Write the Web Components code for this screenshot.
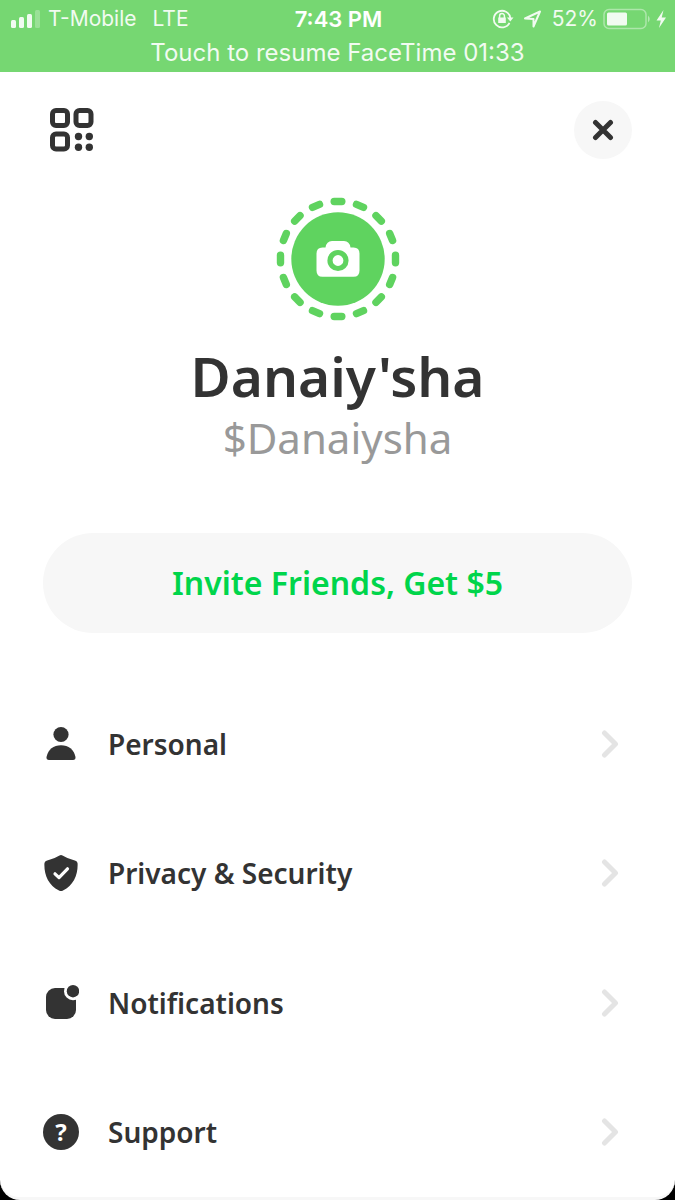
<!DOCTYPE html>
<html lang="en">
<head>
<meta charset="utf-8">
<meta name="viewport" content="width=device-width, initial-scale=1">
<title>Profile</title>
<style>
  html { background: #000; }
  body { margin: 0; font-family: "Noto Sans", "Open Sans", sans-serif; color: #333; }
</style>
</head>
<body>
<profile-page></profile-page>

<template id="page-tpl">
  <style>
    :host { display: flex; flex-direction: column; min-height: 100vh; box-sizing: border-box; background: #fff; border-radius: 0 0 20px 20px; border-bottom: 3px solid #f7f7f7; overflow: hidden; }
    header { display: flex; justify-content: space-between; align-items: center; padding: 29px 43px 0; }
    main { flex: 1; display: flex; flex-direction: column; }
    button { font: inherit; color: inherit; border: 0; padding: 0; margin: 0; background: none; cursor: pointer; }
    button svg { display: block; }
    .qr { padding: 0 7px; }
    .close { width: 58px; height: 58px; border-radius: 50%; background: #f7f7f7; display: grid; place-items: center; }
    .invite { margin: 70px 43px 46px; height: 100px; border-radius: 50px; background: #f7f7f7; color: #00d54b; font-size: 32px; line-height: 40px; font-weight: 600; }
    nav { flex: 1; display: grid; grid-auto-rows: 1fr; }
  </style>
  <status-bar></status-bar>
  <header>
    <button class="qr" aria-label="QR code">
      <svg width="44" height="44" viewBox="0 0 44 44" fill="#333">
        <g fill="none" stroke="#333" stroke-width="5"><rect x="2.5" y="2.5" width="15" height="15" rx="3.5"/><rect x="26" y="2.5" width="15" height="15" rx="3.5"/><rect x="2.5" y="26" width="15" height="15" rx="3.5"/></g>
        <circle cx="28.500" cy="28.500" r="3.700"/><circle cx="39.300" cy="28.500" r="3.700"/><circle cx="28.500" cy="39.300" r="3.700"/><circle cx="39.300" cy="39.300" r="3.700"/>
      </svg>
    </button>
    <button class="close" aria-label="Close">
      <svg width="22" height="22" viewBox="0 0 22 22" fill="none" stroke="#333" stroke-width="5" stroke-linecap="round"><path d="M3.500 3.500 18.500 18.500M18.500 3.500 3.500 18.500"/></svg>
    </button>
  </header>
  <main>
    <profile-card name="Danaiy'sha" tag="$Danaiysha"></profile-card>
    <button class="invite">Invite Friends, Get $5</button>
    <nav aria-label="Settings">
      <menu-row href="#personal">
        <svg slot="icon" width="36" height="36" viewBox="0 0 36 36" fill="#333"><circle cx="18" cy="8.500" r="7.600"/><path d="M3.500 31C5 23.500 10.500 19.200 18 19.200S31 23.500 32.500 31Q32.800 34 30 34H6Q3.200 34 3.500 31Z"/></svg>
        Personal
      </menu-row>
      <menu-row href="#privacy">
        <svg slot="icon" width="36" height="36" viewBox="0 0 36 36"><path fill="#333" d="M16.500.4Q18-.3 19.500.4 24.500 3.600 32.500 5.800 34.500 6.300 34.600 8.500C35 20 30.500 30 20 35.500Q18 36.500 16 35.500C5.500 30 1 20 1.400 8.500Q1.500 6.300 3.500 5.800 11.500 3.600 16.500.4Z"/><path d="M12 18.800 16 22.600 24.500 13.800" fill="none" stroke="#fff" stroke-width="3.200" stroke-linecap="round" stroke-linejoin="round"/></svg>
        Privacy &amp; Security
      </menu-row>
      <menu-row href="#notifications">
        <svg slot="icon" width="36" height="36" viewBox="0 0 36 36" fill="#333"><rect x="3" y="3" width="30" height="31" rx="9"/><circle cx="30" cy="6.200" r="9" fill="#fff"/><circle cx="30" cy="6.200" r="6.200"/></svg>
        Notifications
      </menu-row>
      <menu-row href="#support">
        <help-badge slot="icon">?</help-badge>
        Support
      </menu-row>
    </nav>
  </main>
</template>

<template id="status-tpl">
  <style>
    :host { display: block; height: 72px; background: #76d772; color: #fff; font-family: Inter, "Liberation Sans", sans-serif; font-size: 21px; line-height: 38px; }
    .line { display: grid; grid-template-columns: 1fr auto 1fr; padding: 0 8px 0 10px; }
    .side { display: flex; align-items: center; gap: 8px; opacity: .9; }
    .lte { margin-left: 8px; }
    .right { justify-content: flex-end; gap: 9px; }
    .right svg { flex: none; }
    .bat { margin-left: -4px; }
    time { font-size: 22px; font-weight: 600; }
    a { display: block; text-align: center; font-size: 24px; line-height: 30px; color: inherit; text-decoration: none; opacity: .9; }
  </style>
  <div class="line">
    <div class="side">
      <svg width="30" height="18" viewBox="0 0 30 18" fill="#fff"><rect x="1" y="10" width="5" height="8" rx="1.500"/><rect x="9" y="7" width="5" height="11" rx="1.500"/><rect x="17" y="4" width="5" height="14" rx="1.500"/><rect x="25" y="0" width="5" height="18" rx="1.500" opacity=".3"/></svg>
      <span>T-Mobile</span><span class="lte">LTE</span>
    </div>
    <time>7:43 PM</time>
    <div class="side right">
      <svg width="22" height="20" viewBox="0 0 22 20" fill="none" stroke="#fff" stroke-width="1.800"><path d="M17.500 13.800A8.300 8.300 0 1 1 18.300 9"/><path d="M15 8.500h6.500L18.300 12.500Z" fill="#fff" stroke="none"/><rect x="6.200" y="8.500" width="7.600" height="5.500" fill="#fff" stroke="none"/><path d="M7.600 9V7a2.400 2.400 0 0 1 4.800 0v2" stroke-width="1.500"/></svg>
      <svg width="20" height="20" viewBox="0 0 20 20" fill="none" stroke="#fff" stroke-width="2" stroke-linejoin="round"><path d="M2 9.500 17 2.500 10.500 17.500V10Z"/></svg>
      <span>52%</span>
      <svg class="bat" width="64" height="22" viewBox="0 0 64 22"><rect x="1" y="1.500" width="42" height="19" rx="5" fill="none" stroke="#fff" stroke-width="1.500" opacity=".45"/><rect x="4" y="4.500" width="20" height="13" rx="1.500" fill="#fff"/><path d="M45 7.500q3.500 3.500 0 7Z" fill="#fff" opacity=".5"/><path d="M60.500 2 53.500 12.500h4.300L56 20 63 9.500h-4.300Z" fill="#fff"/></svg>
    </div>
  </div>
  <a href="#call">Touch to resume FaceTime 01:33</a>
</template>

<template id="card-tpl">
  <style>
    :host { display: flex; flex-direction: column; align-items: center; padding-top: 38px; text-align: center; }
    button { border: 0; padding: 0; background: none; cursor: pointer; }
    svg { display: block; }
    h1 { margin: 18px 0 0; font-size: 55px; line-height: 74px; font-weight: 600; }
    p { margin: 0; font-size: 42px; line-height: 50px; font-weight: 400; color: #999; }
  </style>
  <button aria-label="Add photo">
    <svg width="124" height="124" viewBox="0 0 124 124">
      <g class="ring" fill="#5fd35f"></g>
      <circle cx="62" cy="62" r="46.700" fill="#5fd35f"/>
      <path fill="#fff" d="M49.500 50.500Q50.500 44 56 44H68Q73.500 44 74.500 50.500H77.500Q83.500 50.500 83.500 56.500V73.500Q83.500 79.800 77.500 79.800H46.500Q40.500 79.800 40.500 73.500V56.500Q40.500 50.500 46.500 50.500Z"/>
      <circle cx="62" cy="63.500" r="8" fill="#fff" stroke="#5fd35f" stroke-width="5.200"/>
    </svg>
  </button>
  <h1></h1>
  <p></p>
</template>

<template id="row-tpl">
  <style>
    :host { display: grid; }
    a { display: flex; align-items: center; gap: 29px; padding: 0 56px 0 43px; color: #333; text-decoration: none; font-size: 28px; line-height: 38px; font-weight: 600; }
    .label { flex: 1; }
    ::slotted([slot="icon"]) { display: block; flex: none; }
    svg { display: block; }
  </style>
  <a>
    <slot name="icon"></slot>
    <span class="label"><slot></slot></span>
    <svg width="18" height="28" viewBox="0 0 18 28" fill="none" stroke="#e4e4e4" stroke-width="5" stroke-linejoin="round" stroke-linecap="round"><path d="M3.500 3 14.500 14 3.500 25"/></svg>
  </a>
</template>

<template id="badge-tpl">
  <style>
    :host { display: block; width: 36px; height: 36px; border-radius: 50%; background: #333; color: #fff; text-align: center; font-size: 24px; line-height: 36px; font-weight: 700; }
  </style>
  <slot></slot>
</template>

<script>
  class Base extends HTMLElement {
    constructor() {
      super();
      const tpl = document.getElementById(this.constructor.template);
      this.attachShadow({ mode: "open" }).append(tpl.content.cloneNode(true));
    }
  }
  customElements.define("status-bar", class extends Base { static template = "status-tpl"; });
  customElements.define("help-badge", class extends Base { static template = "badge-tpl"; });
  customElements.define("profile-card", class extends Base {
    static template = "card-tpl";
    connectedCallback() {
      this.shadowRoot.querySelector("h1").textContent = this.getAttribute("name");
      this.shadowRoot.querySelector("p").textContent = this.getAttribute("tag");
      // sixteen rounded dashes around the avatar
      const ring = this.shadowRoot.querySelector(".ring");
      for (let i = 0; i < 16; i++) {
        const r = document.createElementNS("http://www.w3.org/2000/svg", "rect");
        const attrs = { x: 54.5, y: 0.8, width: 15, height: 7.4, rx: 3.7, transform: `rotate(${i * 22.5} 62 62)` };
        for (const k in attrs) r.setAttribute(k, attrs[k]);
        ring.append(r);
      }
    }
  });
  customElements.define("menu-row", class extends Base {
    static template = "row-tpl";
    connectedCallback() { this.shadowRoot.querySelector("a").href = this.getAttribute("href"); }
  });
  customElements.define("profile-page", class extends Base { static template = "page-tpl"; });
</script>
</body>
</html>
